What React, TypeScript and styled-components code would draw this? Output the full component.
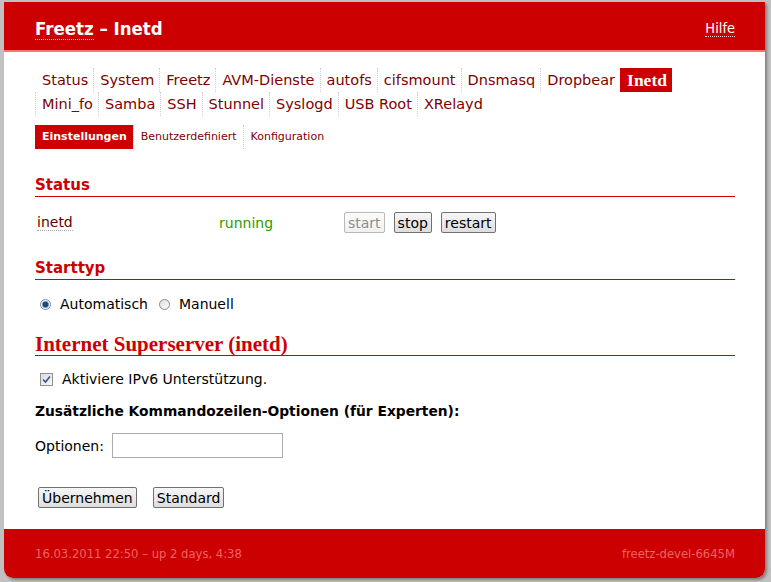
import React from 'react';
import styled, { createGlobalStyle } from 'styled-components';

const GlobalStyle = createGlobalStyle`
  html, body {
    margin: 0;
    padding: 0;
    background: #c1c1c1;
  }
  body {
    font-family: "DejaVu Sans", Verdana, sans-serif;
    font-size: 14px;
    color: #000;
  }
`;

const Page = styled.div`
  padding: 2px 6px 5px 4px;
`;

const Panel = styled.div`
  background: #fff;
  border-radius: 0 0 9px 9px;
  box-shadow: 2px 2px 3px rgba(0, 0, 0, 0.35);
  overflow: hidden;
`;

const Header = styled.header`
  height: 44px;
  padding: 4px 30px 0 31px;
  background: #cc0000;
  border-bottom: 2px solid #ff7474;
  display: flex;
  align-items: center;
  justify-content: space-between;
  font-family: "DejaVu Sans Condensed", "DejaVu Sans", sans-serif;
  color: #fff;
`;

const Title = styled.h1`
  margin: 0;
  font-size: 18.5px;
  font-weight: bold;
  color: #fff;
`;

const HeadLink = styled.a<{ $size: number }>`
  color: #fff;
  text-decoration: none;
  border-bottom: 1px dotted #ffd6d6;
  font-size: ${p => p.$size}px;
`;

const Content = styled.main`
  padding: 16px 30px 21px 31px;
  display: flex;
  flex-direction: column;
`;

const Menu = styled.ul`
  list-style: none;
  margin: 0;
  padding: 0;
  max-width: 690px;
  display: flex;
  flex-wrap: wrap;
`;

const MenuItem = styled.li<{ $active?: boolean }>`
  height: 24px;
  line-height: 24px;
  padding: 0 5px 0 6px;
  border-left: 1px dotted ${p => (p.$active ? '#cc0000' : '#cfcfcf')};
  background: ${p => (p.$active ? '#cc0000' : 'transparent')};
  color: ${p => (p.$active ? '#fff' : '#800000')};
  font-family: ${p => (p.$active ? '"Liberation Serif", serif' : 'inherit')};
  font-weight: ${p => (p.$active ? 'bold' : 'normal')};
  font-size: ${p => (p.$active ? '17.5px' : '14.5px')};
  &:first-child {
    border-left-color: transparent;
  }
`;

const SubMenu = styled.ul`
  list-style: none;
  margin: 9px 0 0;
  padding: 0;
  display: flex;
`;

const SubItem = styled.li<{ $active?: boolean }>`
  height: 24px;
  line-height: 24px;
  font-size: 11px;
  padding: 0 6px 0 7px;
  border-left: 1px dotted #cfcfcf;
  background: ${p => (p.$active ? '#cc0000' : 'transparent')};
  color: ${p => (p.$active ? '#fff' : '#800000')};
  font-weight: ${p => (p.$active ? 'bold' : 'normal')};
  &:first-child {
    border-left: none;
  }
`;

const Heading = styled.h2<{ $serif?: boolean; $top: number }>`
  margin: ${p => p.$top}px 0 0;
  color: #cc0000;
  font-family: ${p => (p.$serif ? '"Liberation Serif", serif' : 'inherit')};
  font-size: ${p => (p.$serif ? '21px' : '15px')};
  font-weight: bold;
  line-height: 18px;
  padding-bottom: 2px;
  border-bottom: 1px solid #cc0000;
`;

const StatusRow = styled.div`
  display: grid;
  grid-template-columns: 182px 125px auto;
  align-items: center;
  margin-top: 15px;
  padding-left: 2px;
`;

const DaemonName = styled.span`
  color: #600000;
  border-bottom: 1px dotted #aaa;
  justify-self: start;
  line-height: 16px;
`;

const Running = styled.span`
  color: #2f9a00;
`;

const ButtonGroup = styled.div`
  display: flex;
  gap: 9px;
`;

const Button = styled.button`
  font-family: "DejaVu Sans", Verdana, sans-serif;
  font-size: 14px;
  height: 21px;
  padding: 0 3px;
  line-height: 18px;
  color: #000;
  background: linear-gradient(#f6f6f6, #dedede);
  border: 1px solid #707070;
  border-radius: 2px;
  &:disabled {
    color: #8d8d8d;
    border-color: #b8b8b8;
    background: linear-gradient(#fbfbfb, #f1f1f1);
  }
`;

const OptionRow = styled.div<{ $top: number }>`
  display: flex;
  align-items: center;
  margin-top: ${p => p.$top}px;
  padding-left: 5px;
  gap: 9px;
`;

const Radio = styled.span<{ $checked?: boolean }>`
  width: 11px;
  height: 11px;
  border-radius: 50%;
  border: 1px solid #8a8a8a;
  box-sizing: border-box;
  background: ${p =>
    p.$checked
      ? 'radial-gradient(circle, #1b4a6e 0 2.5px, #5a9bd0 3px, #f2f2f2 4px)'
      : 'linear-gradient(135deg, #e2e2e2, #fafafa)'};
  flex: none;
`;

const RadioLabel = styled.span`
  margin-right: 2px;
`;

const CheckBox = styled.span`
  width: 13px;
  height: 13px;
  box-sizing: border-box;
  border: 1px solid #8e8f8f;
  background: linear-gradient(135deg, #dcdcdc, #f8f8f8);
  display: flex;
  align-items: center;
  justify-content: center;
  flex: none;
`;

const SubTitle = styled.div`
  margin-top: 16px;
  font-weight: bold;
  font-size: 13.8px;
`;

const FieldRow = styled.label`
  display: flex;
  align-items: center;
  gap: 8px;
  margin-top: 14px;
`;

const TextInput = styled.input`
  width: 171px;
  height: 25px;
  box-sizing: border-box;
  border: 1px solid #ababab;
  font-family: inherit;
  font-size: 13px;
`;

const Actions = styled.div`
  display: flex;
  gap: 16px;
  margin-top: 29px;
  padding-left: 3px;
`;

const Footer = styled.footer`
  height: 49px;
  background: #cc0000;
  display: flex;
  align-items: center;
  justify-content: space-between;
  padding: 0 30px 0 31px;
  font-size: 11.6px;
  color: #f46262;
`;

const menu = [
  'Status', 'System', 'Freetz', 'AVM-Dienste', 'autofs', 'cifsmount', 'Dnsmasq',
  'Dropbear', 'Inetd', 'Mini_fo', 'Samba', 'SSH', 'Stunnel', 'Syslogd', 'USB Root', 'XRelayd',
];

const subMenu = ['Einstellungen', 'Benutzerdefiniert', 'Konfiguration'];

const App: React.FC = () => {
  return (
    <>
      <GlobalStyle />
      <Page>
        <Panel>
          <Header>
            <Title>
              <HeadLink $size={18.5} href="#">Freetz</HeadLink> – Inetd
            </Title>
            <HeadLink $size={14.5} href="#">Hilfe</HeadLink>
          </Header>

          <Content>
            <Menu>
              {menu.map(item => (
                <MenuItem key={item} $active={item === 'Inetd'}>{item}</MenuItem>
              ))}
            </Menu>
            <SubMenu>
              {subMenu.map((item, i) => (
                <SubItem key={item} $active={i === 0}>{item}</SubItem>
              ))}
            </SubMenu>

            <Heading $top={27}>Status</Heading>
            <StatusRow>
              <DaemonName>inetd</DaemonName>
              <Running>running</Running>
              <ButtonGroup>
                <Button disabled>start</Button>
                <Button>stop</Button>
                <Button>restart</Button>
              </ButtonGroup>
            </StatusRow>

            <Heading $top={26}>Starttyp</Heading>
            <OptionRow $top={16}>
              <Radio $checked />
              <RadioLabel>Automatisch</RadioLabel>
              <Radio />
              <RadioLabel>Manuell</RadioLabel>
            </OptionRow>

            <Heading $top={23} $serif>Internet Superserver (inetd)</Heading>
            <OptionRow $top={15}>
              <CheckBox>
                <svg width="9" height="9" viewBox="0 0 9 9">
                  <path d="M1 4.5 L3.5 7 L8 1.5" fill="none" stroke="#3b4f8a" strokeWidth="1.6" />
                </svg>
              </CheckBox>
              <span>Aktiviere IPv6 Unterstützung.</span>
            </OptionRow>

            <SubTitle>Zusätzliche Kommandozeilen-Optionen (für Experten):</SubTitle>
            <FieldRow>
              Optionen:
              <TextInput type="text" />
            </FieldRow>

            <Actions>
              <Button>Übernehmen</Button>
              <Button>Standard</Button>
            </Actions>
          </Content>

          <Footer>
            <span>16.03.2011 22:50 – up 2 days, 4:38</span>
            <span>freetz-devel-6645M</span>
          </Footer>
        </Panel>
      </Page>
    </>
  );
};

export default App;
